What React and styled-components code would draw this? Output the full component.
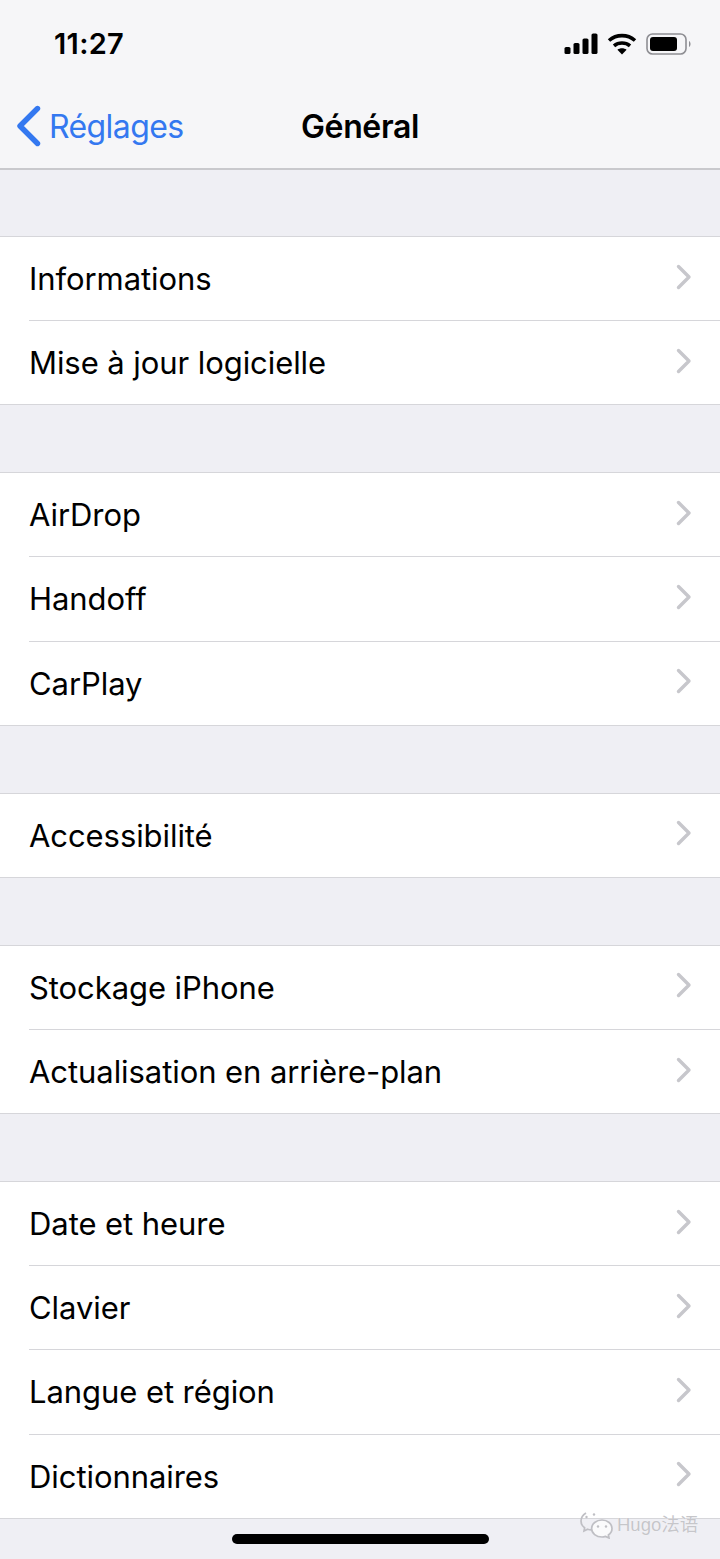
import React from 'react';
import styled, { createGlobalStyle } from 'styled-components';

const GROUPS = [
  ['Informations', 'Mise à jour logicielle'],
  ['AirDrop', 'Handoff', 'CarPlay'],
  ['Accessibilité'],
  ['Stockage iPhone', 'Actualisation en arrière-plan'],
  ['Date et heure', 'Clavier', 'Langue et région', 'Dictionnaires'],
];

const Chevron = () => (
  <ChevronIcon viewBox="0 0 16 26" fill="none">
    <path d="M2.5 2.5 L13 13 L2.5 23.5" stroke="#c7c7cc" strokeWidth="3.4" strokeLinecap="round" strokeLinejoin="round" />
  </ChevronIcon>
);

const StatusIcons = () => (
  <StatusRight>
    <svg width="34" height="22" viewBox="0 0 34 22" fill="#000">
      <rect x="0.5" y="14" width="6" height="7" rx="1.6" />
      <rect x="9.5" y="10" width="6" height="11" rx="1.6" />
      <rect x="18.5" y="5.5" width="6" height="15.5" rx="1.6" />
      <rect x="27.5" y="0.5" width="6" height="20.5" rx="1.6" />
    </svg>
    <svg width="30" height="22" viewBox="0 0 30 22" fill="none" stroke="#000" strokeWidth="3.6">
      <path d="M2 7.5 C9.5 1 20.5 1 28 7.5" />
      <path d="M7 12.8 C11.5 9 18.5 9 23 12.8" />
      <path d="M15 21.5 L10.4 16.8 C13 14.8 17 14.8 19.6 16.8 Z" fill="#000" stroke="none" />
    </svg>
    <svg width="46" height="22" viewBox="0 0 46 22" fill="none">
      <rect x="1" y="1" width="39" height="20" rx="5.5" stroke="#8e8e93" strokeWidth="1.6" />
      <rect x="4" y="4" width="27" height="14" rx="3" fill="#000" />
      <path d="M43 8 C45 9 45 13 43 14 Z" fill="#8e8e93" />
    </svg>
  </StatusRight>
);

const Watermark = () => (
  <Mark>
    <svg width="33" height="28" viewBox="0 0 33 28" fill="none" stroke="#bfbfc4" strokeWidth="1.7">
      <path d="M6 2 C2.8 4 1 6.6 1 10 C1 12.8 2.4 15.2 4.6 16.8 L4 20 L7.6 18.2 C8.8 18.6 10 18.8 11.4 18.8" />
      <path d="M22 26 C16.2 26 11.6 22.4 11.6 17.6 C11.6 12.8 16.2 9 22 9 C27.6 9 32 12.8 32 17.6 C32 20.4 30.6 22.6 28.4 24 L29 27 L25.6 25.4 C24.4 25.8 23.2 26 22 26 Z" fill="#fafafb" />
      <circle cx="18" cy="15.5" r="1.2" fill="#bfbfc4" stroke="none" />
      <circle cx="26" cy="15.5" r="1.2" fill="#bfbfc4" stroke="none" />
      <circle cx="6.5" cy="6" r="1.2" fill="#bfbfc4" stroke="none" />
      <circle cx="14" cy="3.5" r="1.2" fill="#bfbfc4" stroke="none" />
    </svg>
    <MarkText>Hugo法语</MarkText>
  </Mark>
);

const App = () => (
  <Screen>
    <GlobalStyle />
    <Header>
      <StatusBar>
        <Time>11:27</Time>
        <StatusIcons />
      </StatusBar>
      <NavBar>
        <BackLink>
          <svg width="26" height="42" viewBox="0 0 26 42" fill="none">
            <path d="M22.5 3.5 L5 21 L22.5 38.5" stroke="#3478f0" strokeWidth="5.4" strokeLinecap="round" strokeLinejoin="round" />
          </svg>
          <BackLabel>Réglages</BackLabel>
        </BackLink>
        <NavTitle>Général</NavTitle>
      </NavBar>
    </Header>
    <List>
      {GROUPS.map(group => (
        <Group key={group[0]}>
          {group.map(item => (
            <Row key={item}>
              <RowInner>
                <RowLabel>{item}</RowLabel>
                <Chevron />
              </RowInner>
            </Row>
          ))}
        </Group>
      ))}
    </List>
    <Footer>
      <HomeIndicator />
      <Watermark />
    </Footer>
  </Screen>
);

export default App;

const GlobalStyle = createGlobalStyle`
  html, body {
    margin: 0;
    padding: 0;
    background: #efeff4;
  }
  * {
    box-sizing: border-box;
  }
`;

const Screen = styled.div`
  width: 720px;
  height: 1559px;
  overflow: hidden;
  display: flex;
  flex-direction: column;
  background: #efeff4;
  font-family: Inter, "Liberation Sans", sans-serif;
  color: #000;
`;

const Header = styled.header`
  height: 170px;
  flex: none;
  background: #f6f6f8;
  border-bottom: 2px solid #c9c9cd;
`;

const StatusBar = styled.div`
  height: 84px;
  display: flex;
  align-items: center;
  justify-content: space-between;
  padding: 3px 28px 0 54px;
`;

const Time = styled.span`
  font-size: 29px;
  font-weight: 600;
  letter-spacing: 0.3px;
`;

const StatusRight = styled.div`
  display: flex;
  align-items: center;
  gap: 9px;
`;

const NavBar = styled.nav`
  height: 84px;
  position: relative;
  display: flex;
  align-items: center;
  justify-content: center;
`;

const BackLink = styled.a`
  position: absolute;
  left: 15px;
  top: 21px;
  display: flex;
  align-items: center;
  gap: 8px;
  color: #3478f0;
`;

const BackLabel = styled.span`
  font-size: 32px;
  letter-spacing: -0.6px;
`;

const NavTitle = styled.h1`
  margin: 0;
  font-size: 32px;
  font-weight: 600;
  letter-spacing: -0.35px;
`;

const List = styled.main`
  flex: 1;
  display: flex;
  flex-direction: column;
  gap: 67px;
  padding-top: 66px;
`;

const Group = styled.section`
  background: #fff;
  border-top: 1px solid #d6d6da;
  border-bottom: 1px solid #d6d6da;
`;

const Row = styled.div`
  height: 84.15px;
  padding-left: 29px;
  &:first-child {
    height: 83.15px;
  }
  & + & > div {
    border-top: 1px solid #d6d6da;
  }
`;

const RowInner = styled.div`
  height: 100%;
  display: flex;
  align-items: center;
  justify-content: space-between;
  padding-right: 28px;
`;

const RowLabel = styled.span`
  font-size: 31px;
  letter-spacing: -0.07px;
`;

const ChevronIcon = styled.svg`
  width: 16px;
  height: 26px;
  margin-top: -4px;
`;

const Footer = styled.footer`
  flex: 1;
  position: relative;
  display: flex;
  justify-content: center;
  padding-top: 15px;
`;

const HomeIndicator = styled.div`
  width: 257px;
  height: 10px;
  border-radius: 5px;
  background: #000;
`;

const Mark = styled.div`
  position: absolute;
  left: 580px;
  top: -8px;
  display: flex;
  align-items: center;
  gap: 4px;
`;

const MarkText = styled.span`
  font-family: "Liberation Sans", "Noto Sans CJK SC", sans-serif;
  font-size: 18.5px;
  line-height: 22px;
  margin-top: 0;
  color: #c6c6ca;
  text-shadow: 0 0 1px #fff;
`;
